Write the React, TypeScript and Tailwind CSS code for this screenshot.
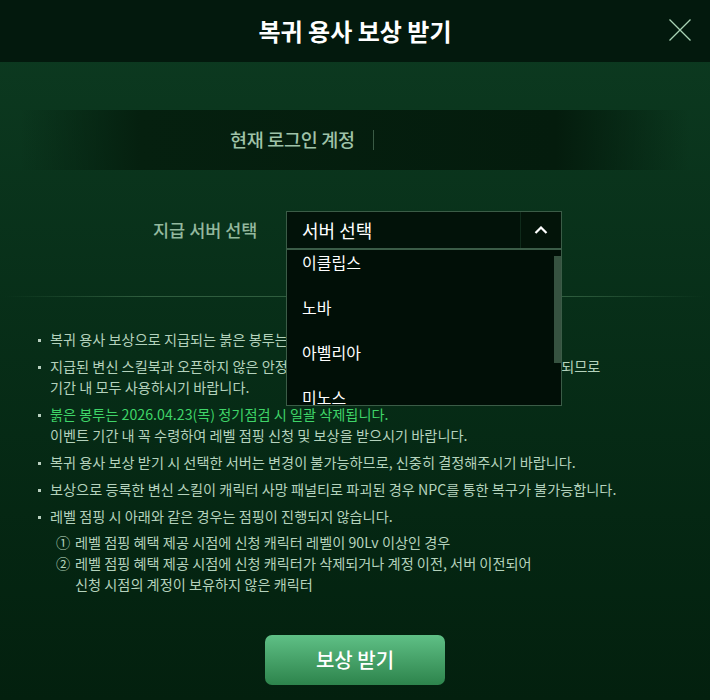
const servers = ["이클립스", "노바", "아벨리아", "미노스", "아스테리아"];

function Bullet({ children, green }: { children: React.ReactNode; green?: boolean }) {
  return (
    <li className={`flex ${green ? "text-[#3fd468]" : ""}`}>
      <span className="mt-[10px] mr-[9px] h-[3px] w-[3px] shrink-0 bg-[#b8cfbf]" />
      <div>{children}</div>
    </li>
  );
}

export default function App(): React.ReactElement {
  return (
    <div className="flex h-[700px] w-[710px] flex-col overflow-hidden bg-gradient-to-b from-[#0d3b21] to-[#03200e] font-['Noto_Sans_CJK_KR',sans-serif]">
      {/* header */}
      <header className="relative flex h-[62px] shrink-0 items-center justify-center bg-[#03190d]">
        <h1 className="text-[24px] font-bold text-white">복귀 용사 보상 받기</h1>
        <button className="absolute right-[18px] top-[18px] h-[24px] w-[24px]">
          <svg viewBox="0 0 24 24" className="h-[24px] w-[24px]" stroke="#a9d2b3" strokeWidth="1.3" fill="none">
            <path d="M1.5 1.5 L22.5 22.5 M22.5 1.5 L1.5 22.5" />
          </svg>
        </button>
      </header>

      {/* account */}
      <div className="mx-[20px] mt-[48px] flex h-[60px] items-center bg-[linear-gradient(90deg,transparent,#05200f_18%,#041c0d_80%,transparent)] pl-[210px]">
        <span className="text-[18.5px] font-medium tracking-[-0.3px] text-[#9fc2a8]">현재 로그인 계정</span>
        <span className="ml-[18px] h-[20px] w-px bg-[#3a5b45]" />
      </div>

      {/* server select */}
      <div className="mt-[41px] flex items-center pl-[153px]">
        <span className="w-[133px] text-[17.5px] font-medium text-[#93b89e]">지급 서버 선택</span>
        <div className="relative flex h-[38px] w-[276px] border border-[#3b5c47] bg-[#021209]">
          <span className="flex-1 pl-[15px] text-[18px] leading-[36px] text-white">서버 선택</span>
          <span className="flex w-[41px] items-center justify-center border-l border-[#0f2a1a] bg-[#031409]">
            <svg viewBox="0 0 14 8" className="h-[8px] w-[14px]" stroke="white" strokeWidth="2.2" fill="none">
              <path d="M1.5 7 L7 1.5 L12.5 7" />
            </svg>
          </span>

          {/* dropdown list */}
          <div className="absolute left-[-1px] top-[37px] z-10 h-[157px] w-[276px] overflow-hidden border border-[#3b5c47] bg-[#010f07]">
            <div className="-mt-[10px]">
              {servers.map((s) => (
                <div key={s} className="h-[45px] pl-[15px] text-[16px] leading-[45px] text-white">
                  {s}
                </div>
              ))}
            </div>
            <div className="absolute right-0 top-[6px] h-[107px] w-[7px] bg-[#365240]" />
          </div>
        </div>
      </div>

      <div className="mx-[5px] mt-[47px] h-px shrink-0 bg-[linear-gradient(90deg,transparent,#2f5d3e_20%,#2f5d3e_80%,transparent)]" />

      {/* notices */}
      <ul className="mt-[32px] flex flex-col gap-[6px] pl-[38px] pr-[10px] text-[14.2px] leading-[21px] text-[#b4d2bc]">
        <Bullet>복귀 용사 보상으로 지급되는 붉은 봉투는 캐릭터 귀속 아이템입니다.</Bullet>
        <Bullet>
          지급된 변신 스킬북과 오픈하지 않은 안정화 상자는 이벤트 기간 종료 후에 자동 일괄 삭제되므로
          <br />
          기간 내 모두 사용하시기 바랍니다.
        </Bullet>
        <Bullet green>
          붉은 봉투는 2026.04.23(목) 정기점검 시 일괄 삭제됩니다.
          <br />
          <span className="text-[#b4d2bc]">이벤트 기간 내 꼭 수령하여 레벨 점핑 신청 및 보상을 받으시기 바랍니다.</span>
        </Bullet>
        <Bullet>복귀 용사 보상 받기 시 선택한 서버는 변경이 불가능하므로, 신중히 결정해주시기 바랍니다.</Bullet>
        <Bullet>보상으로 등록한 변신 스킬이 캐릭터 사망 패널티로 파괴된 경우 NPC를 통한 복구가 불가능합니다.</Bullet>
        <Bullet>
          레벨 점핑 시 아래와 같은 경우는 점핑이 진행되지 않습니다.
          <div className="mt-[5px] flex flex-col pl-[6px]">
            <div className="flex">
              <span className="w-[19px] shrink-0">①</span>
              <span>레벨 점핑 혜택 제공 시점에 신청 캐릭터 레벨이 90Lv 이상인 경우</span>
            </div>
            <div className="flex">
              <span className="w-[19px] shrink-0">②</span>
              <span>
                레벨 점핑 혜택 제공 시점에 신청 캐릭터가 삭제되거나 계정 이전, 서버 이전되어
                <br />
                신청 시점의 계정이 보유하지 않은 캐릭터
              </span>
            </div>
          </div>
        </Bullet>
      </ul>

      <button className="mx-auto mt-[40px] h-[50px] w-[180px] shrink-0 rounded-[7px] bg-gradient-to-b from-[#5fc086] to-[#2d844c] text-[20px] font-medium text-white">
        보상 받기
      </button>
    </div>
  );
}
